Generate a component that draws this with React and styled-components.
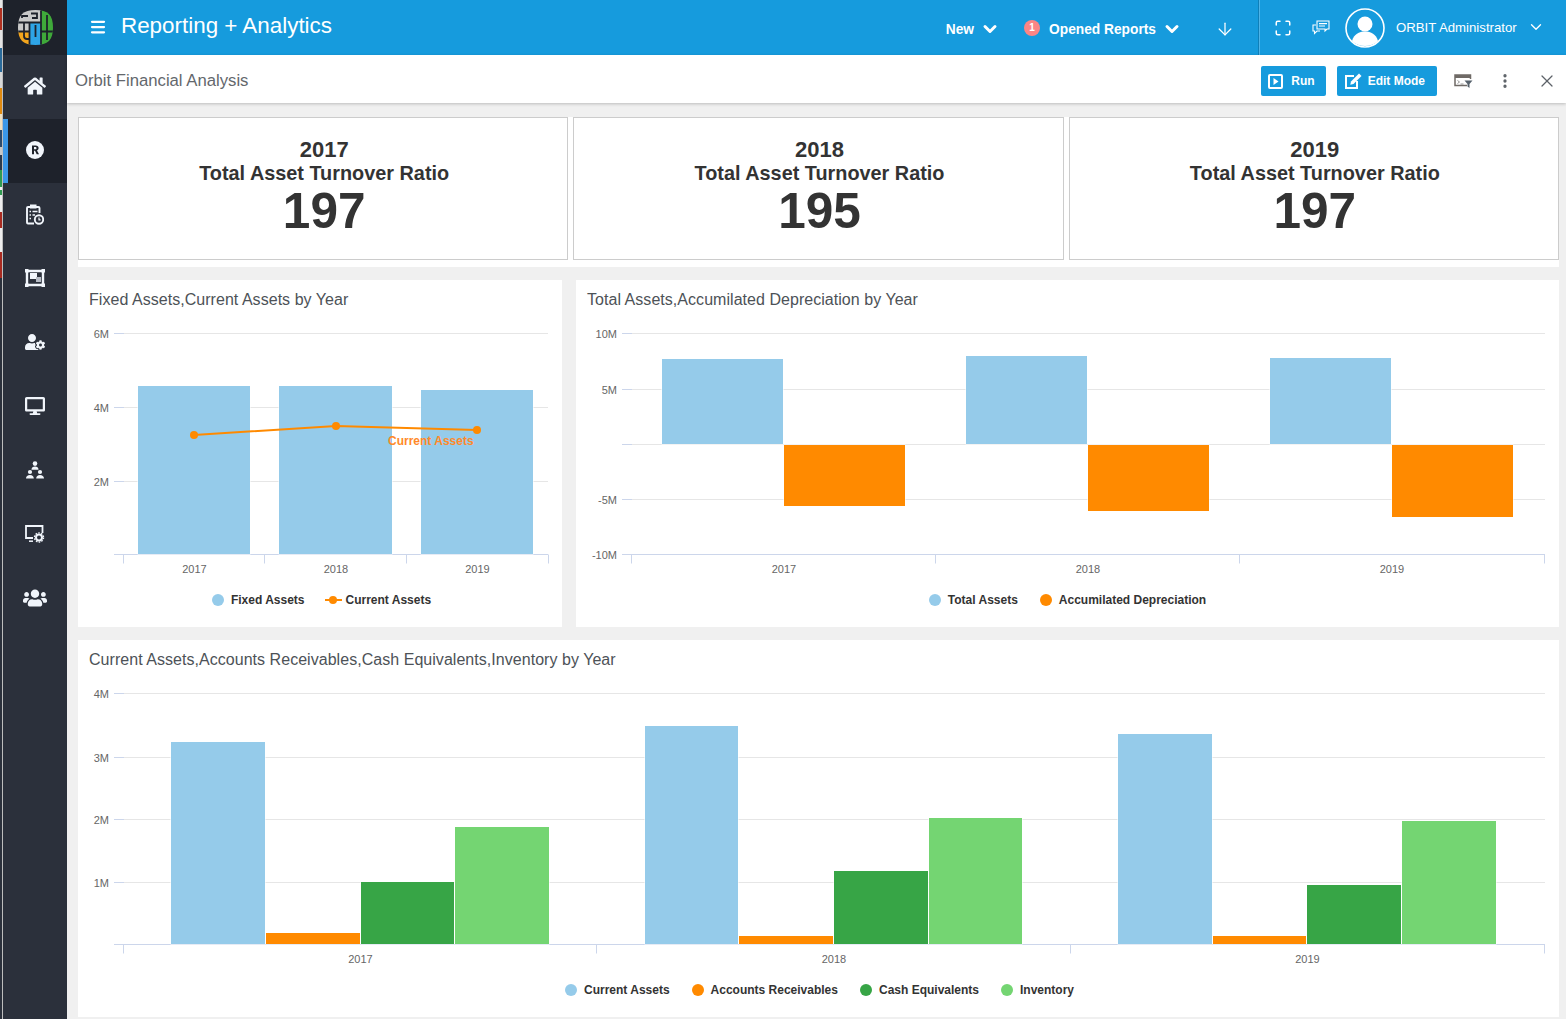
import React from 'react'
import styled, { createGlobalStyle } from 'styled-components'
import { FaHome, FaUserCog, FaDesktop, FaUsers } from 'react-icons/fa'
import { ArrowDown, ChevronDown, Maximize, X, MoreVertical, Menu } from 'lucide-react'

const GlobalStyle = createGlobalStyle`
    html, body { margin: 0; padding: 0; height: 100%; overflow: hidden; }
    body { font-family: "Liberation Sans", Arial, sans-serif; background: #f0f0f0; }
`

const Page = styled.div`
    display: flex;
    width: 1566px;
    height: 1019px;
    overflow: hidden;
`
// sliver of the window behind the app
const BehindStrip = styled.div`
    width: 2px;
    flex: none;
    border-right: 1px solid #bdbdbd;
    background: linear-gradient(to bottom,
        #e8e8e8 0 8px, #b03020 8px 30px, #e4e4e4 30px 48px, #2a6a9a 48px 72px,
        #d8d8d8 72px 88px, #e08a10 88px 114px, #f0e0c0 114px 130px, #2c4a6c 130px 147px,
        #c8c8c8 147px 155px, #2b3a4c 155px 170px, #2f9a50 170px 187px, #f0f0f0 187px 190px,
        #2f9a50 190px 195px, #eeeeee 195px 212px, #a82a20 212px 228px, #eeeeee 228px 252px,
        #a82a20 252px 278px, #2b303b 278px);
`
const Sidebar = styled.nav`
    width: 64px;
    flex: none;
    background: #2b303b;
    display: flex;
    flex-direction: column;
`
const LogoCell = styled.div`
    height: 55px;
    background: #1e222b;
    display: flex;
    align-items: center;
    justify-content: center;
`
const NavItem = styled.div`
    height: 64px;
    display: flex;
    align-items: center;
    justify-content: center;
    color: #f1f5fb;
    box-sizing: border-box;
    background: ${p => (p.$active ? '#1e222b' : 'transparent')};
    border-left: 5px solid ${p => (p.$active ? '#3b97e8' : 'transparent')};
    padding: 0 5px 2px 0;
`
const Content = styled.div`
    flex: 1;
    min-width: 0;
    display: flex;
    flex-direction: column;
`
const TopBar = styled.header`
    height: 55px;
    flex: none;
    background: #169bdd;
    color: #fff;
    display: flex;
    align-items: center;
`
const MenuButton = styled.div`
    display: flex;
    margin: -1px 0 0 22px;
`
const AppTitle = styled.div`
    font-size: 22.4px;
    margin-left: 14px;
    margin-top: -3px;
`
const TopActions = styled.div`
    margin-left: auto;
    display: flex;
    align-items: center;
    height: 100%;
`
const TopLink = styled.div`
    font-size: 13.75px;
    font-weight: 600;
    display: flex;
    align-items: center;
    gap: 6px;
    margin: 3px ${p => p.$gap}px 0 0;
`
const Badge = styled.span`
    width: 16px;
    height: 16px;
    border-radius: 50%;
    background: #fb8585;
    font-size: 10px;
    font-weight: bold;
    text-align: center;
    line-height: 16px;
    margin-right: 9px;
`
const ArrowSlot = styled.div`
    display: flex;
    margin: 3px 24px 0 0;
`
const UserArea = styled.div`
    height: 55px;
    box-sizing: border-box;
    border-left: 1px solid #4fb4e8;
    box-shadow: -1px 0 0 #0f7fb8;
    display: flex;
    align-items: center;
    padding-left: 14px;
    width: 307px;
`
const IconSlot = styled.div`
    display: flex;
    margin-right: ${p => p.$gap}px;
`
const UserName = styled.div`
    font-size: 13.2px;
    margin-left: 11px;
    margin-top: -1px;
`
const UserChevron = styled.div`
    display: flex;
    margin: -1px 0 0 10px;
`
const SubBar = styled.div`
    height: 48px;
    flex: none;
    box-sizing: border-box;
    padding: 4px 0 0 8px;
    background: #fff;
    box-shadow: 0 1px 3px rgba(0, 0, 0, 0.22);
    display: flex;
    align-items: center;
    position: relative;
    z-index: 1;
`
const ReportName = styled.div`
    font-size: 16.7px;
    color: #63676c;
`
const SubActions = styled.div`
    margin-left: auto;
    display: flex;
    align-items: center;
    color: #5d6268;
`
const ActionButton = styled.div`
    height: 30px;
    box-sizing: border-box;
    padding: 0 ${p => p.$padRight}px 0 ${p => p.$padLeft}px;
    margin-right: ${p => p.$gap}px;
    background: #169bdd;
    border-radius: 2px;
    color: #fff;
    font-size: 12px;
    font-weight: bold;
    display: flex;
    align-items: center;
    gap: ${p => p.$iconGap}px;
`
const Dashboard = styled.main`
    flex: 1;
    padding: 14px 7px 0 11px;
    display: flex;
    flex-direction: column;
    gap: 13px;
    min-height: 0;
`
const KpiRow = styled.section`
    height: 150px;
    flex: none;
    background: #fff;
    display: flex;
    gap: 5px;
    align-items: flex-start;
`
const KpiCard = styled.div`
    flex: 1;
    height: 143px;
    box-sizing: border-box;
    border: 1px solid #cccccc;
    background: #fff;
    color: #333;
    text-align: center;
    font-weight: bold;
    padding: 20px 0 0 2px;
`
const KpiYear = styled.div`
    font-size: 22px;
    line-height: 24px;
`
const KpiLabel = styled.div`
    font-size: 19.85px;
    line-height: 23px;
`
const KpiValue = styled.div`
    font-size: 49.5px;
    line-height: 52px;
`
const ChartRow = styled.section`
    display: flex;
    gap: 14px;
    height: 347px;
    flex: none;
`
const ChartPanel = styled.div`
    background: #fff;
    width: ${p => p.$width}px;
    height: ${p => p.$height}px;
    flex: none;
    display: flex;
    flex-direction: column;
`
const ChartTitle = styled.div`
    font-size: 16px;
    line-height: 18px;
    letter-spacing: 0.04px;
    color: #4d5257;
    padding: 11px 0 0 11px;
`
const ChartSvg = styled.svg`
    display: block;
    margin-top: 11px;
    font-family: "Liberation Sans", Arial, sans-serif;
`
const Legend = styled.div`
    display: flex;
    justify-content: center;
    align-items: center;
    gap: ${p => p.$gap}px;
    height: 16px;
    padding-left: ${p => p.$shift}px;
    font-size: 12px;
    font-weight: bold;
    color: #333;
`
const LegendItem = styled.div`
    display: flex;
    align-items: center;
    gap: ${p => (p.$line ? 4 : 7)}px;
`
const LegendDot = styled.span`
    width: 12px;
    height: 12px;
    border-radius: 50%;
    background: ${p => p.$color};
`
const LegendLine = styled.span`
    width: 17px;
    height: 2px;
    background: ${p => p.$color};
    position: relative;
    &::after {
        content: "";
        position: absolute;
        left: 4px;
        top: -3px;
        width: 8px;
        height: 8px;
        border-radius: 50%;
        background: ${p => p.$color};
    }
`

const BLUE = '#95cbea'
const ORANGE = '#ff8a00'
const GREEN = '#37a546'
const LIGHT_GREEN = '#74d572'
const DARK = '#1e222b'

const Logo = () => (
    <svg width="35" height="35" viewBox="0 0 35 35">
        <clipPath id="globe">
            <path d="M0 17.500C0 5 5 0 17.500 0S35 5 35 17.500 30 35 17.500 35 0 30 0 17.500Z" />
        </clipPath>
        <g clipPath="url(#globe)">
            <rect width="23" height="22" fill="#c9c9c9" />
            <rect x="23" width="12" height="35" fill="#3fa93a" />
            <rect y="22" width="12" height="13" fill="#f3a51d" />
            <rect x="12" y="13" width="11" height="22" fill="#2ea4e6" />
            <g stroke={DARK} strokeWidth="1.800" fill="none">
                <path d="M0 12.500H23" />
                <path d="M0 21.500H12M23 21.500H35" />
                <path d="M11.500 12.500V35M23 0V35" />
                <path d="M6 13V21M29 5V30" />
                <path d="M17.500 15V27" />
                <path d="M4 8V6H10M13 3.500H19V8H14" />
                <path d="M6 22V26Q6 29 9 29H12" />
            </g>
        </g>
    </svg>
)

const RIcon = () => (
    <svg width="18" height="18" viewBox="0 0 18 18">
        <circle cx="9" cy="9" r="9" fill="#f1f5fb" />
        <path d="M6 4.500h3.600c1.900 0 3 1 3 2.600 0 1.200-.6 2-1.600 2.300l2 3.900h-2.300L9 9.800H8v3.500H6zM8 6.100v2.200h1.300c.8 0 1.200-.4 1.200-1.100s-.4-1.100-1.200-1.100z" fill={DARK} />
    </svg>
)

const ClipboardClock = () => (
    <svg width="18" height="21" viewBox="0 0 18 21" fill="none" stroke="#f1f5fb" strokeWidth="1.900">
        <path d="M8 19.500H2a1 1 0 0 1-1-1V4a1 1 0 0 1 1-1h10.500a1 1 0 0 1 1 1v5" />
        <rect x="4" y="0.500" width="6.500" height="4" fill="#f1f5fb" stroke="none" />
        <path d="M3.500 7.500h1.500M6.500 7.500h5M3.500 11h1.500M6.500 11h2.500M3.500 14.500h1.500" strokeWidth="1.500" />
        <circle cx="13" cy="15.500" r="4.200" />
        <path d="M13 13.500v2.300h1.600" strokeWidth="1.200" />
    </svg>
)

const FrameIcon = () => (
    <svg width="20" height="18" viewBox="0 0 20 18">
        <path d="M2 2h16v14H2z" fill="none" stroke="#f1f5fb" strokeWidth="2.400" />
        <path d="M0 0h3.500v3.500H0zM16.500 0H20v3.500h-3.500zM0 14.500h3.500V18H0zM16.500 14.500H20V18h-3.500z" fill="#f1f5fb" />
        <rect x="5" y="4" width="7" height="6" fill="#f1f5fb" />
        <rect x="11" y="8" width="5" height="5" fill="#b7bcc6" />
    </svg>
)

const NetworkIcon = () => (
    <svg width="18" height="18" viewBox="0 0 18 18" fill="#f1f5fb">
        <circle cx="9" cy="2.600" r="2.300" />
        <path d="M5.500 8.800C5.500 6.600 7 5.600 9 5.600s3.500 1 3.500 3.200z" />
        <circle cx="4" cy="11" r="2.100" />
        <circle cx="14" cy="11" r="2.100" />
        <path d="M0 17.500c0-2.300 1.600-3.500 4-3.500s3.800 1.200 3.800 3.500zM10.200 17.500c0-2.300 1.600-3.500 3.800-3.500s4 1.200 4 3.500z" />
    </svg>
)

const ScreenGear = () => (
    <svg width="20" height="18" viewBox="0 0 20 18" fill="none" stroke="#f1f5fb">
        <path d="M8 13H1V1h16.500v7" strokeWidth="1.800" />
        <path d="M4 16.200h4" strokeWidth="1.500" />
        <circle cx="14" cy="12.500" r="3" strokeWidth="2" />
        <circle cx="14" cy="12.500" r="4.600" strokeWidth="1.200" strokeDasharray="1.600 1.300" />
    </svg>
)

const ChatIcon = () => (
    <svg width="18" height="16" viewBox="0 0 18 16" fill="none" stroke="#fff" strokeWidth="1.100">
        <path d="M5 1h12v8h-2l-2 2v-2H5z" />
        <path d="M7 3.600h8M7 6h6" />
        <path d="M4 5H1v6h1.500v2.500L5 11h3" />
    </svg>
)

const Avatar = () => (
    <svg width="40" height="40" viewBox="0 0 40 40">
        <circle cx="20" cy="20" r="19" fill="none" stroke="#fff" strokeWidth="1.600" />
        <circle cx="20" cy="16" r="7.500" fill="#fff" />
        <path d="M7 33c2-7 7-9.500 13-9.500S31 26 33 33c-3.500 3.200-8 5-13 5s-9.500-1.800-13-5z" fill="#fff" />
    </svg>
)

const PlayBoxIcon = () => (
    <svg width="15" height="15" viewBox="0 0 15 15" fill="none">
        <rect x="1" y="1" width="13" height="13" rx="1" stroke="#fff" strokeWidth="2" />
        <path d="M5.500 4v7l5-3.500z" fill="#fff" />
    </svg>
)

const EditIcon = () => (
    <svg width="19" height="18" viewBox="0 0 19 18" fill="none">
        <path d="M13 9v7H2V4h8" stroke="#fff" strokeWidth="2" />
        <path d="M7 9.500 15 1.500l2.500 2.500-8 8-3.200.7z" fill="#fff" />
    </svg>
)

const ConsoleFilterIcon = () => (
    <svg width="19" height="15" viewBox="0 0 19 15" fill="none">
        <path d="M13 11.500H1V1h15.500v4" stroke="#6f6a66" strokeWidth="1.500" />
        <rect x="1" y="1" width="15.500" height="3" fill="#6f6a66" />
        <path d="M3.500 6.500l2 1.500-2 1.500M6.500 10h3" stroke="#8a8a8a" strokeWidth="0.900" />
        <path d="M10.500 6.500h8l-3 3.500v4l-2-1.500V10z" fill="#55606b" />
    </svg>
)

const BoldChevron = () => <ChevronDown size={20} strokeWidth={3.6} />

// axis grid, ticks and year labels shared by the three charts
const Axes = ({ gridLeft, tickLeft, right, axisY, lines, ticks, years, labelY }) => (
    <g>
        {lines.map(l => (
            <g key={l.y}>
                <line x1={tickLeft} x2={right} y1={l.y} y2={l.y} stroke="#e6e6e6" />
                <line x1={gridLeft} x2={tickLeft} y1={l.y} y2={l.y} stroke="#ccd6eb" />
                <text x={gridLeft - 5} y={l.y + 4.5} textAnchor="end" fontSize="11" fill="#666">{l.label}</text>
            </g>
        ))}
        <line x1={gridLeft} x2={right} y1={axisY} y2={axisY} stroke="#ccd6eb" />
        {ticks.map(t => (
            <line key={t} x1={t} x2={t} y1={axisY} y2={axisY + 9} stroke="#ccd6eb" />
        ))}
        {years.map(y => (
            <text key={y.label} x={y.x} y={labelY} textAnchor="middle" fontSize="11" fill="#666">{y.label}</text>
        ))}
    </g>
)

const Bar = ({ x1, x2, top, bottom, color }) => (
    <rect x={x1} y={top} width={x2 - x1} height={bottom - top} fill={color} stroke="#fff" strokeWidth="1" paintOrder="stroke" />
)

const fixedBars = [[138, 250, 386], [279, 392, 386], [421, 533, 390]]
const linePoints = [[194, 435], [336, 426], [477, 430]]

const FixedChart = () => (
    <ChartSvg width="484" height="272" viewBox="78 320 484 272">
        <Axes
            gridLeft={114} tickLeft={124} right={548} axisY={554.5} labelY={573}
            lines={[{ label: '6M', y: 333.5 }, { label: '4M', y: 407.5 }, { label: '2M', y: 481.5 }]}
            ticks={[123.5, 264.5, 406.5, 548.5]}
            years={[{ label: '2017', x: 194.5 }, { label: '2018', x: 336 }, { label: '2019', x: 477.5 }]}
        />
        {fixedBars.map(b => <Bar key={b[0]} x1={b[0]} x2={b[1]} top={b[2]} bottom={554} color={BLUE} />)}
        <polyline points={linePoints.map(p => p.join(',')).join(' ')} fill="none" stroke={ORANGE} strokeWidth="2" />
        {linePoints.map(p => <circle key={p[0]} cx={p[0]} cy={p[1]} r="4" fill={ORANGE} />)}
        <text x="388" y="445" fontSize="12" fontWeight="bold" fill="#ff8a2a">Current Assets</text>
    </ChartSvg>
)

const depreciationBars = [
    [662, 783, 359, 444, BLUE], [784, 905, 445, 506, ORANGE],
    [966, 1087, 356, 444, BLUE], [1088, 1209, 445, 511, ORANGE],
    [1270, 1391, 358, 444, BLUE], [1392, 1513, 445, 517, ORANGE],
]

const DepreciationChart = () => (
    <ChartSvg width="983" height="272" viewBox="576 320 983 272">
        <Axes
            gridLeft={622} tickLeft={632} right={1545} axisY={554.5} labelY={573}
            lines={[{ label: '10M', y: 333.5 }, { label: '5M', y: 389.5 }, { label: '', y: 444.5 }, { label: '-5M', y: 499.5 }]}
            ticks={[631.5, 935.5, 1239.5, 1544.5]}
            years={[{ label: '2017', x: 784 }, { label: '2018', x: 1088 }, { label: '2019', x: 1392 }]}
        />
        <text x="617" y="559" textAnchor="end" fontSize="11" fill="#666">-10M</text>
        {depreciationBars.map(b => <Bar key={b[0]} x1={b[0]} x2={b[1]} top={b[2]} bottom={b[3]} color={b[4]} />)}
    </ChartSvg>
)

const breakdownGroups = [
    { x: [171, 266, 361, 455, 549], tops: [742, 933, 882, 827] },
    { x: [645, 739, 834, 929, 1022], tops: [726, 936, 871, 818] },
    { x: [1118, 1213, 1307, 1402, 1496], tops: [734, 936, 885, 821] },
]
const breakdownColors = [BLUE, ORANGE, GREEN, LIGHT_GREEN]

const BreakdownChart = () => (
    <ChartSvg width="1481" height="302" viewBox="78 680 1481 302">
        <Axes
            gridLeft={114} tickLeft={124} right={1545} axisY={944.5} labelY={963}
            lines={[{ label: '4M', y: 693.5 }, { label: '3M', y: 757.5 }, { label: '2M', y: 819.5 }, { label: '1M', y: 882.5 }]}
            ticks={[123.5, 596.5, 1070.5, 1544.5]}
            years={[{ label: '2017', x: 360.5 }, { label: '2018', x: 834 }, { label: '2019', x: 1307.5 }]}
        />
        {breakdownGroups.map(g => g.tops.map((top, i) => (
            <Bar key={g.x[i]} x1={g.x[i]} x2={g.x[i + 1] - (i === 3 ? 0 : 1)} top={top} bottom={944} color={breakdownColors[i]} />
        )))}
    </ChartSvg>
)

const navItems = [
    <FaHome size={22} />, <RIcon />, <ClipboardClock />, <FrameIcon />, <FaUserCog size={20} />,
    <FaDesktop size={20} />, <NetworkIcon />, <ScreenGear />, <FaUsers size={24} />,
]

const kpis = [
    { year: '2017', value: '197' },
    { year: '2018', value: '195' },
    { year: '2019', value: '197' },
]

const DotLegend = ({ items, gap, shift }) => (
    <Legend $gap={gap} $shift={shift}>
        {items.map(item => (
            <LegendItem key={item.label}>
                <LegendDot $color={item.color} />
                {item.label}
            </LegendItem>
        ))}
    </Legend>
)

export default function App() {
    return (
        <Page>
            <GlobalStyle />
            <BehindStrip />
            <Sidebar>
                <LogoCell><Logo /></LogoCell>
                {navItems.map((icon, i) => (
                    <NavItem key={i} $active={i === 1}>{icon}</NavItem>
                ))}
            </Sidebar>
            <Content>
                <TopBar>
                    <MenuButton><Menu size={18} strokeWidth={3} /></MenuButton>
                    <AppTitle>Reporting + Analytics</AppTitle>
                    <TopActions>
                        <TopLink $gap={24}>New <BoldChevron /></TopLink>
                        <Badge>1</Badge>
                        <TopLink $gap={33}>Opened Reports <BoldChevron /></TopLink>
                        <ArrowSlot><ArrowDown size={20} strokeWidth={1.5} /></ArrowSlot>
                        <UserArea>
                            <IconSlot $gap={20}><Maximize size={18} strokeWidth={2} /></IconSlot>
                            <IconSlot $gap={15}><ChatIcon /></IconSlot>
                            <Avatar />
                            <UserName>ORBIT Administrator</UserName>
                            <UserChevron><ChevronDown size={18} strokeWidth={1.8} /></UserChevron>
                        </UserArea>
                    </TopActions>
                </TopBar>
                <SubBar>
                    <ReportName>Orbit Financial Analysis</ReportName>
                    <SubActions>
                        <ActionButton $padLeft={7} $padRight={11} $iconGap={8} $gap={11}><PlayBoxIcon />Run</ActionButton>
                        <ActionButton $padLeft={7} $padRight={12} $iconGap={5} $gap={17}><EditIcon />Edit Mode</ActionButton>
                        <IconSlot $gap={23}><ConsoleFilterIcon /></IconSlot>
                        <IconSlot $gap={23}><MoreVertical size={18} strokeWidth={2.4} /></IconSlot>
                        <IconSlot $gap={9}><X size={20} strokeWidth={1.5} /></IconSlot>
                    </SubActions>
                </SubBar>
                <Dashboard>
                    <KpiRow>
                        {kpis.map(k => (
                            <KpiCard key={k.year}>
                                <KpiYear>{k.year}</KpiYear>
                                <KpiLabel>Total Asset Turnover Ratio</KpiLabel>
                                <KpiValue>{k.value}</KpiValue>
                            </KpiCard>
                        ))}
                    </KpiRow>
                    <ChartRow>
                        <ChartPanel $width={484} $height={347}>
                            <ChartTitle>Fixed Assets,Current Assets by Year</ChartTitle>
                            <FixedChart />
                            <Legend $gap={20} $shift={3}>
                                <LegendItem><LegendDot $color={BLUE} />Fixed Assets</LegendItem>
                                <LegendItem $line><LegendLine $color={ORANGE} />Current Assets</LegendItem>
                            </Legend>
                        </ChartPanel>
                        <ChartPanel $width={983} $height={347}>
                            <ChartTitle>Total Assets,Accumilated Depreciation by Year</ChartTitle>
                            <DepreciationChart />
                            <DotLegend gap={22} shift={0} items={[
                                { label: 'Total Assets', color: BLUE },
                                { label: 'Accumilated Depreciation', color: ORANGE },
                            ]} />
                        </ChartPanel>
                    </ChartRow>
                    <ChartPanel $width={1481} $height={377}>
                        <ChartTitle>Current Assets,Accounts Receivables,Cash Equivalents,Inventory by Year</ChartTitle>
                        <BreakdownChart />
                        <DotLegend gap={22} shift={2} items={[
                            { label: 'Current Assets', color: BLUE },
                            { label: 'Accounts Receivables', color: ORANGE },
                            { label: 'Cash Equivalents', color: GREEN },
                            { label: 'Inventory', color: LIGHT_GREEN },
                        ]} />
                    </ChartPanel>
                </Dashboard>
            </Content>
        </Page>
    )
}
